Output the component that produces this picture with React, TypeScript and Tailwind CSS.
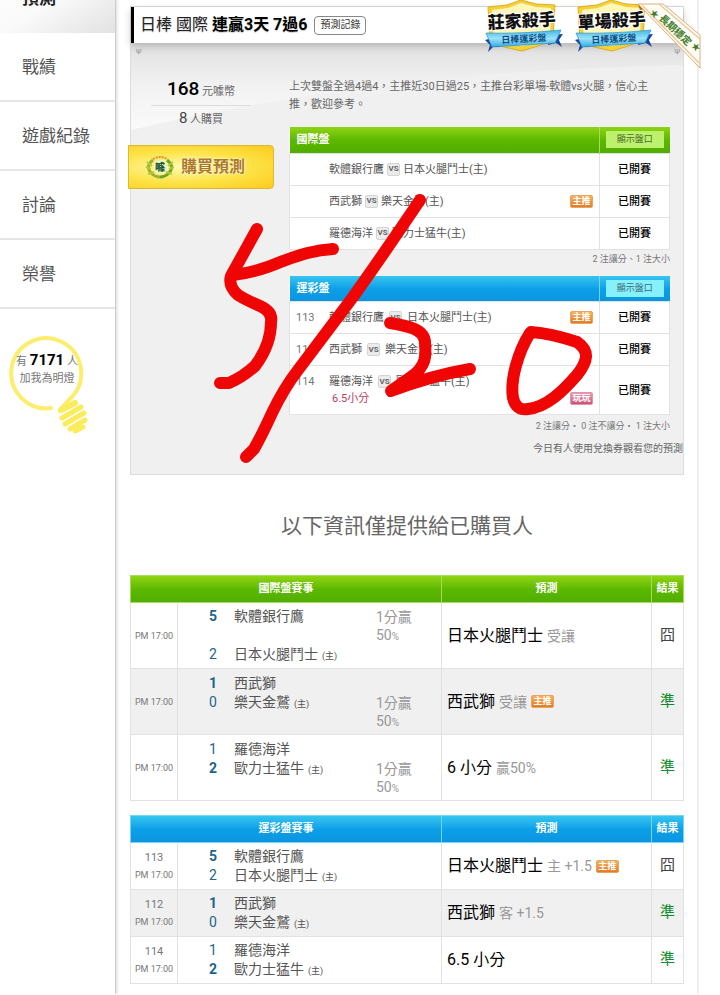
import { clsx } from 'clsx';

type Tone = 'green' | 'blue';

interface PickRow {
  no?: string;
  away: string;
  home: string;
  tag?: 'main' | 'fun';
  note?: string;
}

interface ResultRow {
  no?: string;
  away: string;
  home: string;
  score: [number, number];
  // which team line carries the handicap text
  oddsOn?: 'away' | 'home';
  pick: string;
  detail?: string;
  main?: boolean;
  hit: boolean;
}

const menu = ['戰績', '遊戲紀錄', '討論', '榮譽'];

const intlPicks: PickRow[] = [
  { away: '軟體銀行鷹', home: '日本火腿鬥士' },
  { away: '西武獅', home: '樂天金鷲', tag: 'main' },
  { away: '羅德海洋', home: '歐力士猛牛' },
];

const lotteryPicks: PickRow[] = [
  { no: '113', away: '軟體銀行鷹', home: '日本火腿鬥士', tag: 'main' },
  { no: '112', away: '西武獅', home: '樂天金鷲' },
  { no: '114', away: '羅德海洋', home: '歐力士猛牛', tag: 'fun', note: '6.5小分' },
];

const intlResults: ResultRow[] = [
  { away: '軟體銀行鷹', home: '日本火腿鬥士', score: [5, 2], oddsOn: 'away', pick: '日本火腿鬥士', detail: '受讓', hit: false },
  { away: '西武獅', home: '樂天金鷲', score: [1, 0], oddsOn: 'home', pick: '西武獅', detail: '受讓', main: true, hit: true },
  { away: '羅德海洋', home: '歐力士猛牛', score: [1, 2], oddsOn: 'home', pick: '6 小分', detail: '贏50%', hit: true },
];

const lotteryResults: ResultRow[] = [
  { no: '113', away: '軟體銀行鷹', home: '日本火腿鬥士', score: [5, 2], pick: '日本火腿鬥士', detail: '主 +1.5', main: true, hit: false },
  { no: '112', away: '西武獅', home: '樂天金鷲', score: [1, 0], pick: '西武獅', detail: '客 +1.5', hit: true },
  { no: '114', away: '羅德海洋', home: '歐力士猛牛', score: [1, 2], pick: '6.5 小分', hit: true },
];

const headTone: Record<Tone, string> = {
  green: 'bg-linear-to-b from-[#8fd414] via-[#5cb800] to-[#50ad02]',
  blue: 'bg-linear-to-b from-[#35c5ee] via-[#0b9fe8] to-[#0c94df]',
};
const headLine: Record<Tone, string> = {
  green: 'border-[#a5dc5a]',
  blue: 'border-[#72d6f5]',
};
const oddsBtnTone: Record<Tone, string> = {
  green: 'bg-[#bdf06c] text-[#4c6b2a]',
  blue: 'bg-[#86f1fb] text-[#3c6b78]',
};

function Tag({ kind }: { kind: 'main' | 'fun' }) {
  return (
    <span
      className={clsx(
        'inline-flex h-[13px] w-[23px] shrink-0 items-center justify-center rounded-xs border text-[9px] leading-none font-bold text-white',
        kind === 'main'
          ? 'border-[#e8a560] bg-linear-to-b from-[#f7b25c] to-[#e27a22]'
          : 'border-[#dd96ab] bg-linear-to-b from-[#e99bb4] to-[#cc5378]',
      )}
    >
      {kind === 'main' ? '主推' : '玩玩'}
    </span>
  );
}

function Vs({ wide }: { wide: boolean }) {
  return (
    <span
      className={clsx(
        'inline-flex h-[13px] w-[13px] items-center justify-center rounded-xs border border-[#d4d4d4] bg-[#ececec] text-[8px] leading-none font-bold text-[#666]',
        wide ? 'mx-[5px]' : 'mx-[3px]',
      )}
    >
      VS
    </span>
  );
}

function PickTable({ title, tone, rows }: { title: string; tone: Tone; rows: PickRow[] }) {
  return (
    <table className="w-full border-collapse bg-white text-[11px] leading-[17px] text-[#555]">
      <thead>
        <tr className={clsx('h-[26px] text-white', headTone[tone])}>
          <th className="pl-[7px] text-left font-bold">{title}</th>
          <th className={clsx('w-[70px] border-l', headLine[tone])}>
            <button
              type="button"
              className={clsx('mx-auto block h-[17px] w-[58px] text-[9px] leading-none font-normal', oddsBtnTone[tone])}
            >
              顯示盤口
            </button>
          </th>
        </tr>
      </thead>
      <tbody>
        {rows.map((r) => (
          <tr key={r.away} className="border border-[#e2e2e2]">
            <td className="pr-[6px] pl-[6px]">
              <div className="flex">
                <span className="w-[33px] shrink-0 py-[7px] text-[#777]">{r.no}</span>
                <div className="grow py-[7px]">
                  <div className="flex items-center whitespace-nowrap">
                    {r.away}
                    <Vs wide={!!r.no} />
                    {r.home}(主)
                  </div>
                  {r.note && <div className="pl-[3px] text-[#b8405f]">{r.note}</div>}
                </div>
                {r.tag && (
                  <span className={clsx('flex py-[9px]', r.note && 'items-end')}>
                    <Tag kind={r.tag} />
                  </span>
                )}
              </div>
            </td>
            <td className="border-l border-[#e2e2e2] text-center font-medium text-black">已開賽</td>
          </tr>
        ))}
      </tbody>
    </table>
  );
}

function TeamLine({ score, win, name, home, odds }: { score: number; win: boolean; name: string; home?: boolean; odds?: boolean }) {
  return (
    <div className="flex items-start leading-[19px]">
      <span className={clsx('w-[25px] shrink-0 text-[#1c658d]', win && 'font-bold')}>{score}</span>
      <span className="w-[142px] shrink-0 whitespace-nowrap">
        {name}
        {home && <span className="ml-1 text-[9px]">(主)</span>}
      </span>
      {odds && (
        <span className="h-[38px] pt-px leading-[18px] text-[#999]">
          1分贏
          <br />
          50<span className="text-[10px]">%</span>
        </span>
      )}
    </div>
  );
}

function ResultTable({ title, tone, rows }: { title: string; tone: Tone; rows: ResultRow[] }) {
  const th = clsx('border text-[11px] font-bold text-white', headLine[tone]);
  const td = 'border border-[#e2e2e2]';
  return (
    <table className="w-full table-fixed border-collapse text-sm text-[#555]">
      <colgroup>
        <col className="w-[47px]" />
        <col className="w-[264px]" />
        <col />
        <col className="w-[32px]" />
      </colgroup>
      <thead>
        <tr className={clsx('h-[27px]', headTone[tone])}>
          <th className={th} colSpan={2}>{title}</th>
          <th className={th}>預測</th>
          <th className={th}>結果</th>
        </tr>
      </thead>
      <tbody>
        {rows.map((r) => (
          <tr key={r.away} className={clsx('even:bg-[#f0f0f0]', r.no ? 'h-[47px]' : 'h-[66px]')}>
            <td className={clsx(td, 'text-center text-[9px] whitespace-nowrap text-[#777]')}>
              {r.no && <div className="text-[11px] leading-[18px]">{r.no}</div>}
              <div className="leading-4">PM 17:00</div>
            </td>
            <td className={clsx(td, 'pt-[2px] pl-[31px]')}>
              <TeamLine score={r.score[0]} win={r.score[0] > r.score[1]} name={r.away} odds={r.oddsOn === 'away'} />
              <TeamLine score={r.score[1]} win={r.score[1] > r.score[0]} name={r.home} home odds={r.oddsOn === 'home'} />
            </td>
            <td className={clsx(td, 'pl-[5px]')}>
              <div className="flex items-center gap-1">
                <span className="text-base leading-5 text-black">{r.pick}</span>
                {r.detail && <span className="leading-5 text-[#999]">{r.detail}</span>}
                {r.main && <Tag kind="main" />}
              </div>
            </td>
            <td className={clsx(td, 'text-center text-[15px]', r.hit ? 'text-[#0f8a2c]' : 'text-[#444]')}>
              {r.hit ? '準' : '囧'}
            </td>
          </tr>
        ))}
      </tbody>
    </table>
  );
}

function KillerBadge({ label }: { label: string }) {
  const id = label === '莊家殺手' ? 'banker' : 'single';
  return (
    <svg viewBox="0 0 80 52" className="h-[52px] w-20" role="img" aria-label={`${label} 日棒運彩盤`}>
      <defs>
        <linearGradient id={id} x1="0" y1="0" x2="0" y2="1">
          <stop offset="0" stopColor="#45b7e8" />
          <stop offset="0.5" stopColor="#9be2f8" />
          <stop offset="1" stopColor="#35a9e0" />
        </linearGradient>
      </defs>
      <path d="M4 7 L23 5 L37 0 L52 4 L71 5 L69 40 L54 46 L38 51 L20 47 L6 42 Z" fill="#f3d13c" stroke="#dfae1c" strokeWidth="1" />
      <path d="M8 10 L24 8 L37 3 L52 7 L67 8 L66 38 L38 46 L10 40 Z" fill="#fff7b8" />
      <path d="M1 40 L12 37 L16 47 L9 47 L4 52 L6 45 Z" fill="#17479b" />
      <path d="M79 34 L66 35 L64 45 L72 43 L78 47 L75 40 Z" fill="#17479b" />
      <path d="M2 33 Q38 34 77 30 L71 43 Q38 45 8 47 Z" fill={`url(#${id})`} stroke="#2b93cf" strokeWidth="0.7" />
      <text
        x="38"
        y="27"
        textAnchor="middle"
        fontSize="17"
        fontWeight="900"
        fill="#111"
        stroke="#fff"
        strokeWidth="2"
        paintOrder="stroke"
        transform="rotate(-3 38 27)"
      >
        {label}
      </text>
      <text x="40" y="42" textAnchor="middle" fontSize="9" fontWeight="700" fill="#0d4e86" transform="rotate(-3 40 42)">
        日棒運彩盤
      </text>
    </svg>
  );
}

function CornerRibbon() {
  return (
    <svg viewBox="0 0 68 68" className="h-[68px] w-[68px]" role="img" aria-label="長期穩定">
      <path d="M2 3 L8 8 L4 9 Z M62 57 L64 67 L60 63 Z" fill="#a5602c" />
      <path d="M2 3 L27 3 L64 34 L64 67 Z" fill="#fffdf4" stroke="#dcae7c" strokeWidth="1" />
      <path d="M6 4 L63 62 M23 3 L64 38" stroke="#eac8a0" strokeWidth="1.5" fill="none" />
      <g transform="rotate(43 39 28)" fill="#3f7d2c">
        <text x="40" y="32" textAnchor="middle" fontSize="10" fontWeight="700">
          長期穩定
        </text>
        <text x="9" y="34" fontSize="9">★</text>
        <text x="62" y="30" fontSize="9">★</text>
      </g>
    </svg>
  );
}

function Laurel() {
  return (
    <svg viewBox="0 0 30 24" className="h-6 w-[30px]" aria-hidden="true">
      <path d="M8 5 Q0 11 6 18 Q10 22 15 22" fill="none" stroke="#9bb22b" strokeWidth="3" />
      <path d="M22 5 Q30 11 24 18 Q20 22 15 22" fill="none" stroke="#6da52c" strokeWidth="3" />
      <path d="M2 7 L7 11 M1 12 L6 14 M3 19 L9 17 M28 7 L23 11 M29 12 L24 14 M27 19 L21 17" stroke="#b5c93a" strokeWidth="2" />
      <path d="M8 4 Q15 0 22 4" fill="none" stroke="#d9922b" strokeWidth="2" strokeDasharray="2 1" />
      <circle cx="15" cy="12" r="7" fill="#e9f4c0" />
      <text x="15" y="16" textAnchor="middle" fontSize="10" fontWeight="900" fill="#1d5a25">噱</text>
    </svg>
  );
}

function Bulb() {
  return (
    <svg viewBox="0 0 84 102" className="absolute top-0 left-0 h-[102px] w-[84px]" aria-hidden="true">
      <path d="M46 74 A35 35 0 1 1 67 63 Q59 70 55 77" fill="none" stroke="#fcee6c" strokeWidth="4" strokeLinecap="round" />
      <g stroke="#fbec5c" strokeWidth="5" strokeLinecap="round">
        <path d="M56 76 L70 69" strokeWidth="6" />
        <path d="M57 84 L76 73" />
        <path d="M60 90 L79 79" />
        <path d="M65 95 L80 86" />
        <path d="M70 97 L78 93" />
      </g>
    </svg>
  );
}

// Hand-written date over the page
function Scribble() {
  return (
    <svg
      viewBox="0 0 720 995"
      className="pointer-events-none absolute top-0 left-0 h-[995px] w-[720px]"
      fill="none"
      stroke="#f00505"
      strokeWidth="12"
      strokeLinecap="round"
      strokeLinejoin="round"
      role="img"
      aria-label="5/20"
    >
      <path d="M257 229 L231 276 Q228 286 238 295 Q246 300 260 306 Q273 312 271 322 Q271 345 255 366 Q243 377 229 383 L220 383" />
      <path d="M333 249 C314 250 300 255 283 261 Q255 273 233 275" />
      <path d="M420 200 Q385 252 353 297 L298 370 Q284 388 272 413 Q262 435 254 449 L246 457" />
      <path d="M390 323 C408 326 424 329 425 342 C426 355 427 366 411 377 L391 391 Q430 376 470 369" />
      <path d="M530 333 C518 352 510 380 513 398 Q516 411 528 409 C547 407 563 391 577 375 C588 361 590 351 577 342 C562 337 546 333 531 332" />
    </svg>
  );
}

export default function App() {
  return (
    <div className="relative flex overflow-hidden bg-white font-[Roboto,'Noto_Sans_CJK_TC',sans-serif]">
      <aside className="w-[116px] shrink-0 border-r border-[#ccc] text-[17px] text-[#555] shadow-[1px_0_3px_rgba(0,0,0,0.15)]">
        <nav className="-mt-[36px]">
          <a
            href="#forecast"
            className="flex h-[69px] items-center bg-linear-to-br from-white via-[#fafafa] to-[#e2e2e2] pl-[22px] font-bold text-[#222]"
          >
            預測
          </a>
          {menu.map((m) => (
            <a key={m} href="#menu" className="flex h-[69px] items-center border-b-2 border-[#e6e6e6] pt-[2px] pl-[22px]">
              {m}
            </a>
          ))}
        </nav>
        <div className="relative mt-[25px] ml-[5px] h-[102px] w-[84px]">
          <Bulb />
          <div className="relative pt-[18px] text-center text-[11px] leading-[17px] text-[#777]">
            <div className="whitespace-nowrap">
              有 <b className="text-[15px] text-black">7171</b> 人
            </div>
            <div>加我為明燈</div>
          </div>
        </div>
      </aside>

      <main className="mr-[21px] min-w-0 grow border-r-2 border-[#f0f0f0] pt-[6px] pr-[13px] pb-[10px] pl-[14px]">
        <section className="relative border border-[#dcdcdc] bg-[#f0f0f0]">
          <header className="relative z-10 flex h-9 items-center border-l-3 border-black bg-white pl-[6px] shadow-[0_3px_8px_rgba(0,0,0,0.2)]">
            <h1 className="text-base text-[#222] text-shadow-xs">
              日棒 國際 <b className="text-black">連贏3天 7過6</b>
            </h1>
            <button
              type="button"
              className="ml-[7px] h-[19px] rounded-sm border border-[#888] bg-white px-[5px] text-[10px] leading-none text-[#333]"
            >
              預測記錄
            </button>
          </header>
          <div className="absolute -top-[7px] right-[29px] z-20 flex gap-[10px]">
            <KillerBadge label="莊家殺手" />
            <KillerBadge label="單場殺手" />
          </div>
          <div className="absolute -top-[6px] -right-[21px] z-30">
            <CornerRibbon />
          </div>
          <svg
            viewBox="0 0 554 90"
            preserveAspectRatio="none"
            className="absolute top-9 left-0 h-[90px] w-full"
            aria-hidden="true"
          >
            <defs>
              <linearGradient id="sheen" x1="0" y1="0" x2="0" y2="1">
                <stop offset="0" stopColor="#e0e0e0" />
                <stop offset="0.5" stopColor="#f2f2f2" />
                <stop offset="1" stopColor="#fafafa" />
              </linearGradient>
            </defs>
            <path d="M0 0 H554 V22 Q250 28 0 87 Z" fill="url(#sheen)" />
          </svg>
          <span className="absolute top-[38px] left-[5px] text-[8px] text-[#999]">ψ</span>
          <span className="absolute top-[38px] right-[3px] text-[8px] text-[#999]">ψ</span>

          <div className="relative flex">
            <div className="w-[158px] shrink-0 pt-[33px] text-[11px] text-[#666]">
              <div className="mr-[38px] ml-[20px] border-b border-[#dcdcdc] text-center leading-[26px] whitespace-nowrap">
                <b className="text-[19px] font-medium text-black">168</b> 元噱幣
              </div>
              <div className="mr-[38px] ml-[20px] text-center leading-[25px]">
                <span className="text-[15px] text-[#444]">8</span> 人購買
              </div>
              <button
                type="button"
                className="-ml-[3px] mt-[13px] flex h-11 w-[146px] items-center justify-center gap-[6px] rounded-r border border-[#dfb92c] bg-[radial-gradient(ellipse_at_35%_50%,#fff9b0,#fde44a_50%,#fccb1c)] pr-[12px] text-base font-bold text-[#ad7a1e] text-shadow-[0_0_2px_#fff,0_0_2px_#fff]"
              >
                <Laurel />
                購買預測
              </button>
            </div>
            <div className="min-w-0 grow pt-[35px]">
              <div className="pr-[13px]">
                <p className="text-[11px] leading-[18px] whitespace-nowrap text-[#666]">
                  上次雙盤全過4過4，主推近30日過25，主推台彩單場-軟體vs火腿，信心主
                  <br />
                  推，歡迎參考。
                </p>
                <div className="mt-[13px]">
                  <PickTable title="國際盤" tone="green" rows={intlPicks} />
                </div>
                <p className="text-right text-[9px] leading-[18px] text-[#777]">2 注讓分、1 注大小</p>
                <div className="mt-2">
                  <PickTable title="運彩盤" tone="blue" rows={lotteryPicks} />
                </div>
                <p className="pt-[2px] text-right text-[9px] leading-[18px] text-[#777]">
                  2 注讓分・ 0 注不讓分・ 1 注大小
                </p>
              </div>
              <p className="pt-[5px] pb-[16px] text-right text-[10px] leading-[18px] text-[#666]">
                今日有人使用兌換券觀看您的預測
              </p>
            </div>
          </div>
        </section>

        <h2 className="pt-[36px] pb-[34px] text-center text-[21px] leading-[30px] text-[#666]">以下資訊僅提供給已購買人</h2>

        <ResultTable title="國際盤賽事" tone="green" rows={intlResults} />
        <div className="mt-[14px]">
          <ResultTable title="運彩盤賽事" tone="blue" rows={lotteryResults} />
        </div>
      </main>
      <Scribble />
    </div>
  );
}
